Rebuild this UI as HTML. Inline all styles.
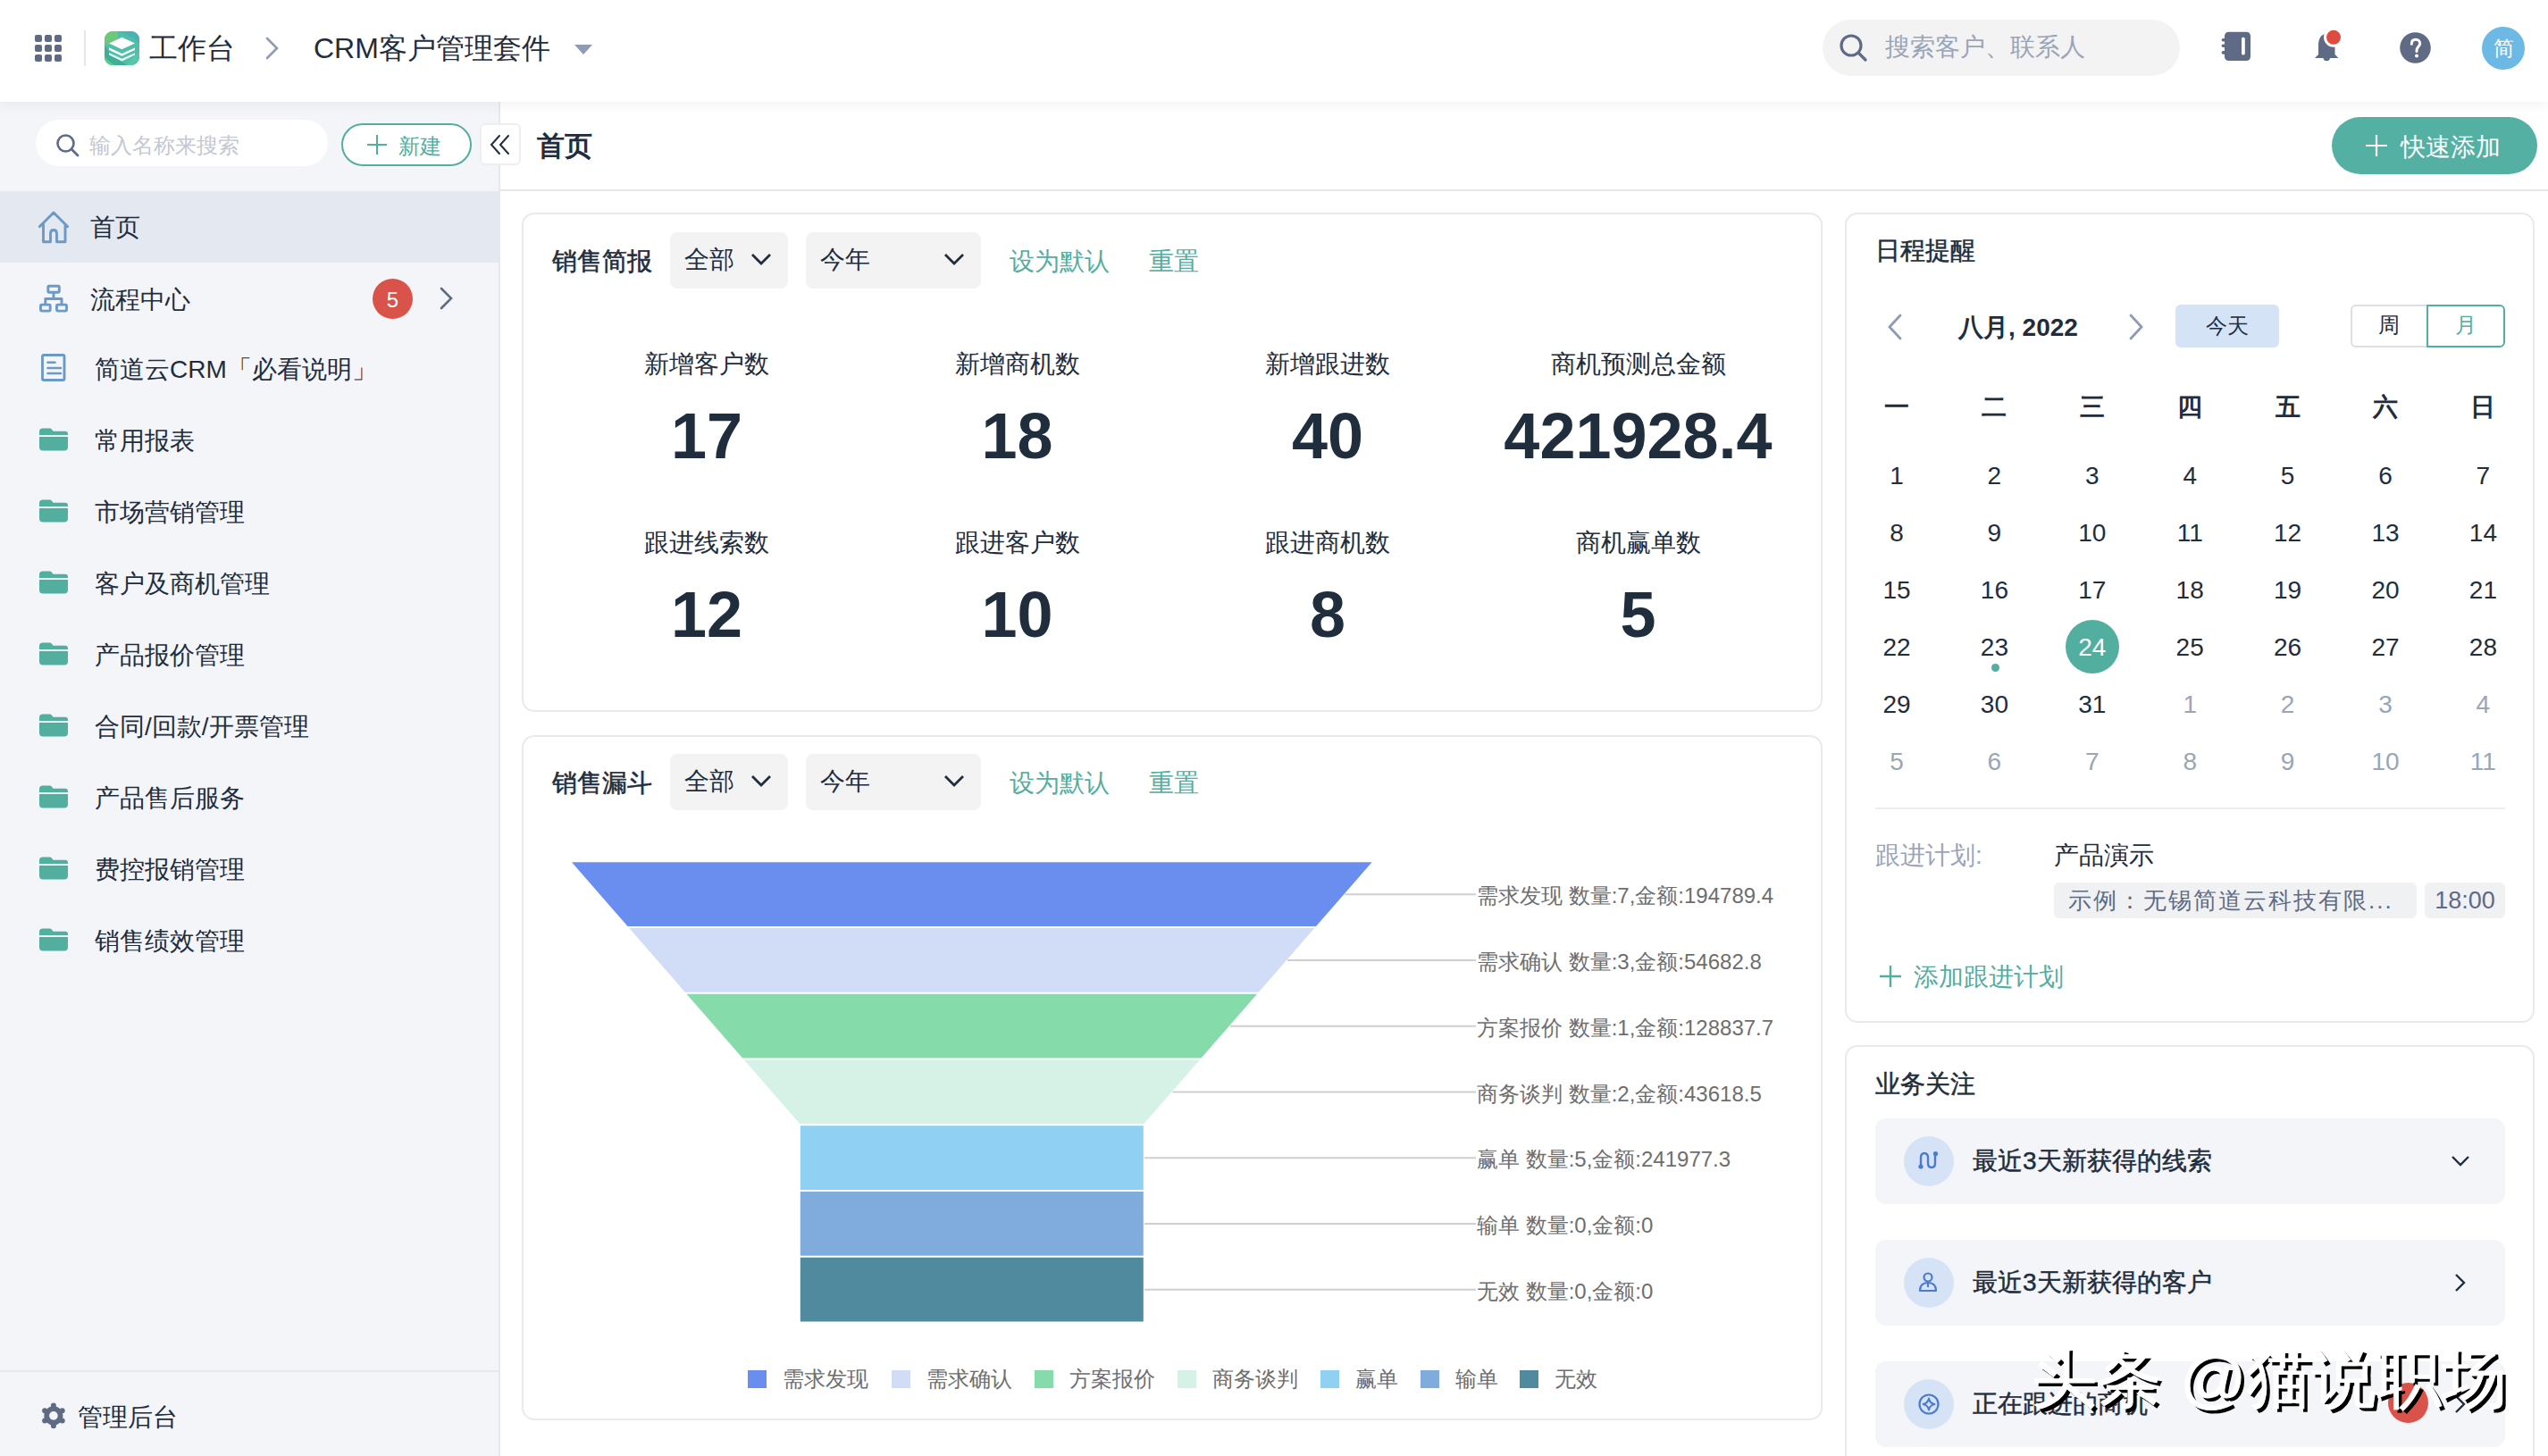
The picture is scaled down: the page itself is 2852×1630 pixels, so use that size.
<!DOCTYPE html>
<html><head><meta charset="utf-8">
<style>
*{margin:0;padding:0;box-sizing:border-box}
html,body{width:2852px;height:1630px;overflow:hidden;background:#fff;font-family:"Liberation Sans",sans-serif;color:#1f2d3d}
.a{position:absolute}
.t{position:absolute;white-space:nowrap;line-height:1}
#hdr{left:0;top:0;width:2852px;height:114px;background:#fff;z-index:3;box-shadow:0 3px 14px rgba(0,0,0,0.06)}
#side{left:0;top:114px;width:560px;height:1516px;background:#f3f5f9;border-right:2px solid #e6e8ec}
.card{position:absolute;background:#fff;border:2px solid #e9eaec;border-radius:14px}
</style></head>
<body>
<div id="hdr" class="a">
  <!-- grid -->
  <svg class="a" style="left:38px;top:38px" width="32" height="32" viewBox="0 0 32 32">
    <g fill="#5f6b84">
      <rect x="1" y="1" width="8" height="8" rx="2"/><rect x="12" y="1" width="8" height="8" rx="2"/><rect x="23" y="1" width="8" height="8" rx="2"/>
      <rect x="1" y="12" width="8" height="8" rx="2"/><rect x="12" y="12" width="8" height="8" rx="2"/><rect x="23" y="12" width="8" height="8" rx="2"/>
      <rect x="1" y="23" width="8" height="8" rx="2"/><rect x="12" y="23" width="8" height="8" rx="2"/><rect x="23" y="23" width="8" height="8" rx="2"/>
    </g>
  </svg>
  <div class="a" style="left:94px;top:34px;width:2px;height:40px;background:#e6e6e6"></div>
  <svg class="a" style="left:117px;top:35px" width="39" height="38" viewBox="0 0 39 38"><defs><clipPath id="lc"><rect width="39" height="38" rx="9"/></clipPath></defs><g clip-path="url(#lc)"><rect width="39" height="38" fill="#4fbfa8"/><path d="M14 0 H39 V14 Q30 4 14 0Z" fill="#47b3b4"/><circle cx="5" cy="5" r="10" fill="#6cc87a"/><path d="M0 16 Q10 30 26 38 H0Z" fill="#3fae96"/><path d="M0 28 Q4 34 12 38 H0Z" fill="#5ccf86"/><path d="M39 22 Q30 32 24 38 H39Z" fill="#56c6ab"/></g><path d="M5 13.5 L19.5 6.8 L34 13.5 L19.5 20.2Z" fill="#fff"/><path d="M5 18.2 L19.5 25 L34 18.4 L34 21 L19.5 27.8 L5 21Z" fill="#fff"/><path d="M5 24 L19.5 30.8 L34 24.2 L34 26.6 L19.5 33.4 L5 26.6Z" fill="#e6fbf6"/></svg>
  <div class="t" style="left:167px;top:38px;font-size:32px;color:#1f2d3d">工作台</div>
  <svg class="a" style="left:296px;top:40px" width="18" height="28" viewBox="0 0 18 28"><path d="M3 3 L14 14 L3 25" fill="none" stroke="#8f9bb3" stroke-width="2.6" stroke-linecap="round"/></svg>
  <div class="t" style="left:351px;top:38px;font-size:32px;color:#1f2d3d">CRM客户管理套件</div>
  <svg class="a" style="left:642px;top:49px" width="22" height="14" viewBox="0 0 22 14"><path d="M1 1 L21 1 L11 12Z" fill="#8f9bb3"/></svg>

  <div class="a" style="left:2040px;top:22px;width:400px;height:63px;border-radius:32px;background:#f3f3f4"></div>
  <svg class="a" style="left:2058px;top:37px" width="34" height="34" viewBox="0 0 34 34"><circle cx="14" cy="14" r="11" fill="none" stroke="#5f6b84" stroke-width="3.2"/><path d="M22 22 L30 30" stroke="#5f6b84" stroke-width="3.2" stroke-linecap="round"/></svg>
  <div class="t" style="left:2110px;top:39px;font-size:28px;color:#9aa5b8">搜索客户、联系人</div>

  <svg class="a" style="left:2484px;top:34px" width="38" height="38" viewBox="0 0 38 38"><rect x="6" y="1.7" width="29" height="32.3" rx="4.5" fill="#5f6b84"/><rect x="2.6" y="9" width="5" height="3.6" rx="1.8" fill="#5f6b84"/><rect x="2.6" y="15.4" width="5" height="3.6" rx="1.8" fill="#5f6b84"/><rect x="2.6" y="23.1" width="5" height="3.6" rx="1.8" fill="#5f6b84"/><rect x="25" y="7.8" width="3.8" height="19.6" rx="1.6" fill="#fff"/></svg>
  <svg class="a" style="left:2586px;top:28px" width="44" height="44" viewBox="0 0 44 44"><path d="M18 10 C11 10 9 17 9 23 L9 33 L5 37 L31.5 37 L27.5 33 L27.5 23 C27.5 17 25 10 18 10Z" fill="#5f6b84"/><path d="M14.5 37 A3.8 3.8 0 0 0 22 37Z" fill="#5f6b84"/><circle cx="26" cy="13.8" r="11" fill="#fff"/><circle cx="26" cy="13.8" r="8" fill="#e04a3f"/></svg>
  <svg class="a" style="left:2686px;top:36px" width="36" height="36" viewBox="0 0 36 36"><circle cx="17.5" cy="17.5" r="17.3" fill="#5f6b84"/><path d="M13.3 13.2 C13.3 10 15.3 8.3 18 8.3 C20.8 8.3 22.7 10.2 22.7 12.8 C22.7 15.8 19 16.5 19 20.5 V21.5" fill="none" stroke="#fff" stroke-width="3" stroke-linecap="round"/><circle cx="19" cy="26.6" r="2" fill="#fff"/></svg>
  <div class="a" style="left:2778px;top:30px;width:48px;height:48px;border-radius:50%;background:#6cb9e6"></div>
  <div class="t" style="left:2778px;top:43px;width:48px;text-align:center;font-size:23px;color:#fff">简</div>
</div>

<div id="side" class="a">
</div>
<!-- sidebar content (absolute page coords) -->
<div class="a" style="left:40px;top:134px;width:327px;height:52px;border-radius:26px;background:#fff"></div>
<svg class="a" style="left:62px;top:149px" width="28" height="28" viewBox="0 0 28 28"><circle cx="11.5" cy="11.5" r="9" fill="none" stroke="#5f6b84" stroke-width="2.6"/><path d="M18.5 18.5 L25 25" stroke="#5f6b84" stroke-width="2.8" stroke-linecap="round"/></svg>
<div class="t" style="left:100px;top:151px;font-size:24px;color:#c3c8d2">输入名称来搜索</div>
<div class="a" style="left:382px;top:138px;width:146px;height:48px;border-radius:24px;border:2px solid #52ae9f;background:#fff"></div>
<svg class="a" style="left:410px;top:150px" width="24" height="24" viewBox="0 0 24 24"><path d="M12 1 V23 M1 12 H23" stroke="#52ae9f" stroke-width="2"/></svg>
<div class="t" style="left:446px;top:152px;font-size:24px;color:#52ae9f">新建</div>
<div class="a" style="left:537px;top:138px;width:46px;height:47px;border-radius:6px;border:2px solid #eceef1;background:#fff;z-index:2"></div>
<svg class="a" style="left:546px;top:150px;z-index:2" width="28" height="24" viewBox="0 0 28 24"><path d="M13 2 L4 12 L13 22 M23 2 L14 12 L23 22" fill="none" stroke="#1f2d3d" stroke-width="2" stroke-linecap="round"/></svg>

<div class="a" style="left:0;top:214px;width:559px;height:80px;background:#e4e8f0"></div>
<svg class="a" style="left:40px;top:234px" width="40" height="40" viewBox="0 0 40 40"><path d="M3.5 20.5 L20 4 L36.5 20.5 M8.5 16 V36.8 H16.5 V27.5 Q16.5 23.5 20 23.5 Q23.5 23.5 23.5 27.5 V36.8 H33 V16" fill="none" stroke="#6c9ac6" stroke-width="2.9" stroke-linejoin="round"/></svg>
<div class="t" style="left:101px;top:241px;font-size:28px">首页</div>

<svg class="a" style="left:40px;top:314px" width="40" height="40" viewBox="0 0 40 40"><g fill="none" stroke="#6c9ac6" stroke-width="2.9" stroke-linejoin="round"><rect x="13.8" y="6.2" width="12.5" height="7" rx="1"/><rect x="5.5" y="27.1" width="10.7" height="7" rx="1"/><rect x="23.5" y="27.1" width="11" height="7" rx="1"/><path d="M20 13.2 V20.5 M10.8 27 V20.5 H29 V27"/></g></svg>
<div class="t" style="left:101px;top:322px;font-size:28px">流程中心</div>
<div class="a" style="left:417px;top:312px;width:45px;height:45px;border-radius:50%;background:#d9534a"></div>
<div class="t" style="left:417px;top:324px;width:45px;text-align:center;font-size:24px;color:#fff">5</div>
<svg class="a" style="left:490px;top:320px" width="20" height="28" viewBox="0 0 20 28"><path d="M4 3 L15 14 L4 25" fill="none" stroke="#5f6b84" stroke-width="2.6" stroke-linecap="round"/></svg>

<svg class="a" style="left:40px;top:390px" width="40" height="40" viewBox="0 0 40 40"><g fill="none" stroke="#6c9ac6" stroke-width="2.9"><rect x="7.5" y="7.5" width="24.5" height="28" rx="1.5"/><path d="M13.5 15.8 H21.5 M13.5 22 H28 M13.5 28 H28" stroke-width="2.6" stroke-linecap="round"/></g></svg>
<div class="t" style="left:106px;top:400px;font-size:28px">简道云CRM「必看说明」</div>
<svg class="a" style="left:44px;top:479px" width="33" height="26" viewBox="0 0 33 26"><path d="M0 4 Q0 0.5 4 0.5 L11.5 0.5 Q13 0.5 14 1.8 L15.5 3.8 L29 3.8 Q32 3.8 32 7 L32 21.5 Q32 25.5 28 25.5 L4 25.5 Q0 25.5 0 21.5Z" fill="#52ae9f"/><path d="M0 9 H33" stroke="#eef9f6" stroke-width="2"/></svg>
<div class="t" style="left:106px;top:480px;font-size:28px">常用报表</div>
<svg class="a" style="left:44px;top:559px" width="33" height="26" viewBox="0 0 33 26"><path d="M0 4 Q0 0.5 4 0.5 L11.5 0.5 Q13 0.5 14 1.8 L15.5 3.8 L29 3.8 Q32 3.8 32 7 L32 21.5 Q32 25.5 28 25.5 L4 25.5 Q0 25.5 0 21.5Z" fill="#52ae9f"/><path d="M0 9 H33" stroke="#eef9f6" stroke-width="2"/></svg>
<div class="t" style="left:106px;top:560px;font-size:28px">市场营销管理</div>
<svg class="a" style="left:44px;top:639px" width="33" height="26" viewBox="0 0 33 26"><path d="M0 4 Q0 0.5 4 0.5 L11.5 0.5 Q13 0.5 14 1.8 L15.5 3.8 L29 3.8 Q32 3.8 32 7 L32 21.5 Q32 25.5 28 25.5 L4 25.5 Q0 25.5 0 21.5Z" fill="#52ae9f"/><path d="M0 9 H33" stroke="#eef9f6" stroke-width="2"/></svg>
<div class="t" style="left:106px;top:640px;font-size:28px">客户及商机管理</div>
<svg class="a" style="left:44px;top:719px" width="33" height="26" viewBox="0 0 33 26"><path d="M0 4 Q0 0.5 4 0.5 L11.5 0.5 Q13 0.5 14 1.8 L15.5 3.8 L29 3.8 Q32 3.8 32 7 L32 21.5 Q32 25.5 28 25.5 L4 25.5 Q0 25.5 0 21.5Z" fill="#52ae9f"/><path d="M0 9 H33" stroke="#eef9f6" stroke-width="2"/></svg>
<div class="t" style="left:106px;top:720px;font-size:28px">产品报价管理</div>
<svg class="a" style="left:44px;top:799px" width="33" height="26" viewBox="0 0 33 26"><path d="M0 4 Q0 0.5 4 0.5 L11.5 0.5 Q13 0.5 14 1.8 L15.5 3.8 L29 3.8 Q32 3.8 32 7 L32 21.5 Q32 25.5 28 25.5 L4 25.5 Q0 25.5 0 21.5Z" fill="#52ae9f"/><path d="M0 9 H33" stroke="#eef9f6" stroke-width="2"/></svg>
<div class="t" style="left:106px;top:800px;font-size:28px">合同/回款/开票管理</div>
<svg class="a" style="left:44px;top:879px" width="33" height="26" viewBox="0 0 33 26"><path d="M0 4 Q0 0.5 4 0.5 L11.5 0.5 Q13 0.5 14 1.8 L15.5 3.8 L29 3.8 Q32 3.8 32 7 L32 21.5 Q32 25.5 28 25.5 L4 25.5 Q0 25.5 0 21.5Z" fill="#52ae9f"/><path d="M0 9 H33" stroke="#eef9f6" stroke-width="2"/></svg>
<div class="t" style="left:106px;top:880px;font-size:28px">产品售后服务</div>
<svg class="a" style="left:44px;top:959px" width="33" height="26" viewBox="0 0 33 26"><path d="M0 4 Q0 0.5 4 0.5 L11.5 0.5 Q13 0.5 14 1.8 L15.5 3.8 L29 3.8 Q32 3.8 32 7 L32 21.5 Q32 25.5 28 25.5 L4 25.5 Q0 25.5 0 21.5Z" fill="#52ae9f"/><path d="M0 9 H33" stroke="#eef9f6" stroke-width="2"/></svg>
<div class="t" style="left:106px;top:960px;font-size:28px">费控报销管理</div>
<svg class="a" style="left:44px;top:1039px" width="33" height="26" viewBox="0 0 33 26"><path d="M0 4 Q0 0.5 4 0.5 L11.5 0.5 Q13 0.5 14 1.8 L15.5 3.8 L29 3.8 Q32 3.8 32 7 L32 21.5 Q32 25.5 28 25.5 L4 25.5 Q0 25.5 0 21.5Z" fill="#52ae9f"/><path d="M0 9 H33" stroke="#eef9f6" stroke-width="2"/></svg>
<div class="t" style="left:106px;top:1040px;font-size:28px">销售绩效管理</div>
<div class="a" style="left:0;top:1534px;width:559px;height:2px;background:#e6e8ec"></div>
<svg class="a" style="left:40px;top:1565px" width="40" height="40" viewBox="0 0 40 40"><g fill="#5f6b84"><circle cx="19.9" cy="19.9" r="10.6"/><circle cx="19.90" cy="8.60" r="3"/><circle cx="29.69" cy="14.25" r="3"/><circle cx="29.69" cy="25.55" r="3"/><circle cx="19.90" cy="31.20" r="3"/><circle cx="10.11" cy="25.55" r="3"/><circle cx="10.11" cy="14.25" r="3"/></g><circle cx="19.9" cy="19.9" r="4.8" fill="#f3f5f9"/></svg>
<div class="t" style="left:87px;top:1573px;font-size:28px">管理后台</div>


<!-- main header -->
<div class="t" style="left:601px;top:148px;font-size:31px;font-weight:bold;color:#1f2d3d">首页</div>
<div class="a" style="left:2610px;top:131px;width:230px;height:64px;border-radius:32px;background:#55b0a4"></div>
<svg class="a" style="left:2647px;top:150px" width="26" height="26" viewBox="0 0 26 26"><path d="M13 1 V25 M1 13 H25" stroke="#fff" stroke-width="2.2"/></svg>
<div class="t" style="left:2687px;top:151px;font-size:28px;color:#fff">快速添加</div>
<div class="a" style="left:560px;top:212px;width:2292px;height:2px;background:#e6e7e9"></div>

<!-- card 1: sales summary -->
<div class="card" style="left:584px;top:238px;width:1456px;height:559px"></div>
<div class="t" style="left:618px;top:279px;font-size:28px;-webkit-text-stroke:0.55px #1f2d3d">销售简报</div>
<div class="a" style="left:750px;top:260px;width:132px;height:63px;border-radius:8px;background:#f3f3f4"></div>
<div class="t" style="left:766px;top:277px;font-size:28px">全部</div>
<svg class="a" style="left:839px;top:282px" width="26" height="18" viewBox="0 0 26 18"><path d="M3 3 L13 13 L23 3" fill="none" stroke="#1f2d3d" stroke-width="2.8"/></svg>
<div class="a" style="left:902px;top:260px;width:196px;height:63px;border-radius:8px;background:#f3f3f4"></div>
<div class="t" style="left:918px;top:277px;font-size:28px">今年</div>
<svg class="a" style="left:1055px;top:282px" width="26" height="18" viewBox="0 0 26 18"><path d="M3 3 L13 13 L23 3" fill="none" stroke="#1f2d3d" stroke-width="2.8"/></svg>
<div class="t" style="left:1130px;top:279px;font-size:28px;color:#52ae9f">设为默认</div>
<div class="t" style="left:1286px;top:279px;font-size:28px;color:#52ae9f">重置</div>
<div class="t" style="left:591.0px;top:394px;width:400px;text-align:center;font-size:28px;color:#1f2d3d">新增客户数</div>
<div class="t" style="left:541.0px;top:452px;width:500px;text-align:center;font-size:72px;font-weight:bold;color:#1f2d3d">17</div>
<div class="t" style="left:938.5px;top:394px;width:400px;text-align:center;font-size:28px;color:#1f2d3d">新增商机数</div>
<div class="t" style="left:888.5px;top:452px;width:500px;text-align:center;font-size:72px;font-weight:bold;color:#1f2d3d">18</div>
<div class="t" style="left:1286.0px;top:394px;width:400px;text-align:center;font-size:28px;color:#1f2d3d">新增跟进数</div>
<div class="t" style="left:1236.0px;top:452px;width:500px;text-align:center;font-size:72px;font-weight:bold;color:#1f2d3d">40</div>
<div class="t" style="left:1633.5px;top:394px;width:400px;text-align:center;font-size:28px;color:#1f2d3d">商机预测总金额</div>
<div class="t" style="left:1583.5px;top:452px;width:500px;text-align:center;font-size:72px;font-weight:bold;color:#1f2d3d">421928.4</div>
<div class="t" style="left:591.0px;top:594px;width:400px;text-align:center;font-size:28px;color:#1f2d3d">跟进线索数</div>
<div class="t" style="left:541.0px;top:652px;width:500px;text-align:center;font-size:72px;font-weight:bold;color:#1f2d3d">12</div>
<div class="t" style="left:938.5px;top:594px;width:400px;text-align:center;font-size:28px;color:#1f2d3d">跟进客户数</div>
<div class="t" style="left:888.5px;top:652px;width:500px;text-align:center;font-size:72px;font-weight:bold;color:#1f2d3d">10</div>
<div class="t" style="left:1286.0px;top:594px;width:400px;text-align:center;font-size:28px;color:#1f2d3d">跟进商机数</div>
<div class="t" style="left:1236.0px;top:652px;width:500px;text-align:center;font-size:72px;font-weight:bold;color:#1f2d3d">8</div>
<div class="t" style="left:1633.5px;top:594px;width:400px;text-align:center;font-size:28px;color:#1f2d3d">商机赢单数</div>
<div class="t" style="left:1583.5px;top:652px;width:500px;text-align:center;font-size:72px;font-weight:bold;color:#1f2d3d">5</div>

<!-- card 2: funnel -->
<div class="card" style="left:584px;top:823px;width:1456px;height:767px"></div>
<div class="t" style="left:618px;top:863px;font-size:28px;-webkit-text-stroke:0.55px #1f2d3d">销售漏斗</div>
<div class="a" style="left:750px;top:844px;width:132px;height:63px;border-radius:8px;background:#f3f3f4"></div>
<div class="t" style="left:766px;top:861px;font-size:28px">全部</div>
<svg class="a" style="left:839px;top:866px" width="26" height="18" viewBox="0 0 26 18"><path d="M3 3 L13 13 L23 3" fill="none" stroke="#1f2d3d" stroke-width="2.8"/></svg>
<div class="a" style="left:902px;top:844px;width:196px;height:63px;border-radius:8px;background:#f3f3f4"></div>
<div class="t" style="left:918px;top:861px;font-size:28px">今年</div>
<svg class="a" style="left:1055px;top:866px" width="26" height="18" viewBox="0 0 26 18"><path d="M3 3 L13 13 L23 3" fill="none" stroke="#1f2d3d" stroke-width="2.8"/></svg>
<div class="t" style="left:1130px;top:863px;font-size:28px;color:#52ae9f">设为默认</div>
<div class="t" style="left:1286px;top:863px;font-size:28px;color:#52ae9f">重置</div>
<svg class="a" style="left:0;top:0" width="2852" height="1630"><polygon points="640.0,965.3 1535.6,965.3 1473.0,1037.1 702.6,1037.1" fill="#6a8ef0"/><line x1="1505.3" y1="1001.2" x2="1652" y2="1001.2" stroke="#cfcfcf" stroke-width="2"/><polygon points="704.3,1039.0 1471.3,1039.0 1408.8,1110.8 766.8,1110.8" fill="#d1dcf7"/><line x1="1441.0" y1="1074.9" x2="1652" y2="1074.9" stroke="#cfcfcf" stroke-width="2"/><polygon points="768.5,1112.8 1407.1,1112.8 1344.5,1184.6 831.1,1184.6" fill="#85dba9"/><line x1="1376.8" y1="1148.7" x2="1652" y2="1148.7" stroke="#cfcfcf" stroke-width="2"/><polygon points="832.8,1186.5 1342.8,1186.5 1280.2,1258.3 895.4,1258.3" fill="#d6f1e6"/><line x1="1312.5" y1="1222.4" x2="1652" y2="1222.4" stroke="#cfcfcf" stroke-width="2"/><polygon points="895.8,1260.3 1279.8,1260.3 1279.8,1332.1 895.8,1332.1" fill="#90d0f2"/><line x1="1280.8" y1="1296.2" x2="1652" y2="1296.2" stroke="#cfcfcf" stroke-width="2"/><polygon points="895.8,1334.0 1279.8,1334.0 1279.8,1405.8 895.8,1405.8" fill="#80abdd"/><line x1="1280.8" y1="1369.9" x2="1652" y2="1369.9" stroke="#cfcfcf" stroke-width="2"/><polygon points="895.8,1407.8 1279.8,1407.8 1279.8,1479.6 895.8,1479.6" fill="#4f8a9e"/><line x1="1280.8" y1="1443.7" x2="1652" y2="1443.7" stroke="#cfcfcf" stroke-width="2"/></svg>
<div class="t" style="left:1653px;top:991.2px;font-size:24px;color:#6e6e6e">需求发现 数量:7,金额:194789.4</div>
<div class="t" style="left:1653px;top:1065.0px;font-size:24px;color:#6e6e6e">需求确认 数量:3,金额:54682.8</div>
<div class="t" style="left:1653px;top:1138.7px;font-size:24px;color:#6e6e6e">方案报价 数量:1,金额:128837.7</div>
<div class="t" style="left:1653px;top:1212.5px;font-size:24px;color:#6e6e6e">商务谈判 数量:2,金额:43618.5</div>
<div class="t" style="left:1653px;top:1286.2px;font-size:24px;color:#6e6e6e">赢单 数量:5,金额:241977.3</div>
<div class="t" style="left:1653px;top:1360.0px;font-size:24px;color:#6e6e6e">输单 数量:0,金额:0</div>
<div class="t" style="left:1653px;top:1433.7px;font-size:24px;color:#6e6e6e">无效 数量:0,金额:0</div>
<div class="a" style="left:837px;top:1534px;width:21px;height:20px;background:#6a8ef0"></div><div class="t" style="left:876px;top:1532px;font-size:24px;color:#6e6e6e">需求发现</div>
<div class="a" style="left:997.5px;top:1534px;width:21px;height:20px;background:#d1dcf7"></div><div class="t" style="left:1036.5px;top:1532px;font-size:24px;color:#6e6e6e">需求确认</div>
<div class="a" style="left:1158px;top:1534px;width:21px;height:20px;background:#85dba9"></div><div class="t" style="left:1197px;top:1532px;font-size:24px;color:#6e6e6e">方案报价</div>
<div class="a" style="left:1317.5px;top:1534px;width:21px;height:20px;background:#d6f1e6"></div><div class="t" style="left:1356.5px;top:1532px;font-size:24px;color:#6e6e6e">商务谈判</div>
<div class="a" style="left:1477.5px;top:1534px;width:21px;height:20px;background:#90d0f2"></div><div class="t" style="left:1516.5px;top:1532px;font-size:24px;color:#6e6e6e">赢单</div>
<div class="a" style="left:1589.5px;top:1534px;width:21px;height:20px;background:#80abdd"></div><div class="t" style="left:1628.5px;top:1532px;font-size:24px;color:#6e6e6e">输单</div>
<div class="a" style="left:1701px;top:1534px;width:21px;height:20px;background:#4f8a9e"></div><div class="t" style="left:1740px;top:1532px;font-size:24px;color:#6e6e6e">无效</div>

<!-- calendar card -->
<div class="card" style="left:2065px;top:238px;width:772px;height:907px"></div>
<div class="t" style="left:2099px;top:267px;font-size:28px;-webkit-text-stroke:0.5px #1f2d3d;color:#1f2d3d">日程提醒</div>
<svg class="a" style="left:2110px;top:350px" width="22" height="32" viewBox="0 0 22 32"><path d="M17 3 L5 16 L17 29" fill="none" stroke="#8f9bb3" stroke-width="2.8" stroke-linecap="round"/></svg>
<div class="t" style="left:2192px;top:353px;font-size:28px;font-weight:bold;color:#1f2d3d">八月, 2022</div>
<svg class="a" style="left:2380px;top:350px" width="22" height="32" viewBox="0 0 22 32"><path d="M5 3 L17 16 L5 29" fill="none" stroke="#8f9bb3" stroke-width="2.8" stroke-linecap="round"/></svg>
<div class="a" style="left:2435px;top:341px;width:116px;height:48px;border-radius:6px;background:#d5e3f7"></div>
<div class="t" style="left:2435px;top:353px;width:116px;text-align:center;font-size:24px;color:#1f2d3d">今天</div>
<div class="a" style="left:2631px;top:341px;width:88px;height:48px;border:2px solid #dcdfe6;border-right:none;border-radius:6px 0 0 6px;background:#fff"></div>
<div class="t" style="left:2631px;top:352px;width:86px;text-align:center;font-size:24px;color:#1f2d3d">周</div>
<div class="a" style="left:2716px;top:341px;width:88px;height:48px;border:2px solid #52ae9f;border-radius:0 6px 6px 0;background:#fff"></div>
<div class="t" style="left:2716px;top:352px;width:88px;text-align:center;font-size:24px;color:#52ae9f">月</div>
<div class="t" style="left:2083.0px;top:442px;width:80px;text-align:center;font-size:28px;font-weight:bold;color:#1f2d3d">一</div>
<div class="t" style="left:2192.4px;top:442px;width:80px;text-align:center;font-size:28px;font-weight:bold;color:#1f2d3d">二</div>
<div class="t" style="left:2301.8px;top:442px;width:80px;text-align:center;font-size:28px;font-weight:bold;color:#1f2d3d">三</div>
<div class="t" style="left:2411.2px;top:442px;width:80px;text-align:center;font-size:28px;font-weight:bold;color:#1f2d3d">四</div>
<div class="t" style="left:2520.6px;top:442px;width:80px;text-align:center;font-size:28px;font-weight:bold;color:#1f2d3d">五</div>
<div class="t" style="left:2630.0px;top:442px;width:80px;text-align:center;font-size:28px;font-weight:bold;color:#1f2d3d">六</div>
<div class="t" style="left:2739.4px;top:442px;width:80px;text-align:center;font-size:28px;font-weight:bold;color:#1f2d3d">日</div>
<div class="t" style="left:2083.0px;top:519px;width:80px;text-align:center;font-size:28px;color:#1f2d3d">1</div>
<div class="t" style="left:2192.4px;top:519px;width:80px;text-align:center;font-size:28px;color:#1f2d3d">2</div>
<div class="t" style="left:2301.8px;top:519px;width:80px;text-align:center;font-size:28px;color:#1f2d3d">3</div>
<div class="t" style="left:2411.2px;top:519px;width:80px;text-align:center;font-size:28px;color:#1f2d3d">4</div>
<div class="t" style="left:2520.6px;top:519px;width:80px;text-align:center;font-size:28px;color:#1f2d3d">5</div>
<div class="t" style="left:2630.0px;top:519px;width:80px;text-align:center;font-size:28px;color:#1f2d3d">6</div>
<div class="t" style="left:2739.4px;top:519px;width:80px;text-align:center;font-size:28px;color:#1f2d3d">7</div>
<div class="t" style="left:2083.0px;top:583px;width:80px;text-align:center;font-size:28px;color:#1f2d3d">8</div>
<div class="t" style="left:2192.4px;top:583px;width:80px;text-align:center;font-size:28px;color:#1f2d3d">9</div>
<div class="t" style="left:2301.8px;top:583px;width:80px;text-align:center;font-size:28px;color:#1f2d3d">10</div>
<div class="t" style="left:2411.2px;top:583px;width:80px;text-align:center;font-size:28px;color:#1f2d3d">11</div>
<div class="t" style="left:2520.6px;top:583px;width:80px;text-align:center;font-size:28px;color:#1f2d3d">12</div>
<div class="t" style="left:2630.0px;top:583px;width:80px;text-align:center;font-size:28px;color:#1f2d3d">13</div>
<div class="t" style="left:2739.4px;top:583px;width:80px;text-align:center;font-size:28px;color:#1f2d3d">14</div>
<div class="t" style="left:2083.0px;top:647px;width:80px;text-align:center;font-size:28px;color:#1f2d3d">15</div>
<div class="t" style="left:2192.4px;top:647px;width:80px;text-align:center;font-size:28px;color:#1f2d3d">16</div>
<div class="t" style="left:2301.8px;top:647px;width:80px;text-align:center;font-size:28px;color:#1f2d3d">17</div>
<div class="t" style="left:2411.2px;top:647px;width:80px;text-align:center;font-size:28px;color:#1f2d3d">18</div>
<div class="t" style="left:2520.6px;top:647px;width:80px;text-align:center;font-size:28px;color:#1f2d3d">19</div>
<div class="t" style="left:2630.0px;top:647px;width:80px;text-align:center;font-size:28px;color:#1f2d3d">20</div>
<div class="t" style="left:2739.4px;top:647px;width:80px;text-align:center;font-size:28px;color:#1f2d3d">21</div>
<div class="t" style="left:2083.0px;top:711px;width:80px;text-align:center;font-size:28px;color:#1f2d3d">22</div>
<div class="t" style="left:2192.4px;top:711px;width:80px;text-align:center;font-size:28px;color:#1f2d3d">23</div>
<div class="a" style="left:2311.8px;top:694px;width:60px;height:60px;border-radius:50%;background:#52ae9f"></div>
<div class="t" style="left:2301.8px;top:711px;width:80px;text-align:center;font-size:28px;color:#fff">24</div>
<div class="t" style="left:2411.2px;top:711px;width:80px;text-align:center;font-size:28px;color:#1f2d3d">25</div>
<div class="t" style="left:2520.6px;top:711px;width:80px;text-align:center;font-size:28px;color:#1f2d3d">26</div>
<div class="t" style="left:2630.0px;top:711px;width:80px;text-align:center;font-size:28px;color:#1f2d3d">27</div>
<div class="t" style="left:2739.4px;top:711px;width:80px;text-align:center;font-size:28px;color:#1f2d3d">28</div>
<div class="t" style="left:2083.0px;top:775px;width:80px;text-align:center;font-size:28px;color:#1f2d3d">29</div>
<div class="t" style="left:2192.4px;top:775px;width:80px;text-align:center;font-size:28px;color:#1f2d3d">30</div>
<div class="t" style="left:2301.8px;top:775px;width:80px;text-align:center;font-size:28px;color:#1f2d3d">31</div>
<div class="t" style="left:2411.2px;top:775px;width:80px;text-align:center;font-size:28px;color:#9aa5b8">1</div>
<div class="t" style="left:2520.6px;top:775px;width:80px;text-align:center;font-size:28px;color:#9aa5b8">2</div>
<div class="t" style="left:2630.0px;top:775px;width:80px;text-align:center;font-size:28px;color:#9aa5b8">3</div>
<div class="t" style="left:2739.4px;top:775px;width:80px;text-align:center;font-size:28px;color:#9aa5b8">4</div>
<div class="t" style="left:2083.0px;top:839px;width:80px;text-align:center;font-size:28px;color:#9aa5b8">5</div>
<div class="t" style="left:2192.4px;top:839px;width:80px;text-align:center;font-size:28px;color:#9aa5b8">6</div>
<div class="t" style="left:2301.8px;top:839px;width:80px;text-align:center;font-size:28px;color:#9aa5b8">7</div>
<div class="t" style="left:2411.2px;top:839px;width:80px;text-align:center;font-size:28px;color:#9aa5b8">8</div>
<div class="t" style="left:2520.6px;top:839px;width:80px;text-align:center;font-size:28px;color:#9aa5b8">9</div>
<div class="t" style="left:2630.0px;top:839px;width:80px;text-align:center;font-size:28px;color:#9aa5b8">10</div>
<div class="t" style="left:2739.4px;top:839px;width:80px;text-align:center;font-size:28px;color:#9aa5b8">11</div>
<div class="a" style="left:2228.5px;top:743px;width:9px;height:9px;border-radius:50%;background:#52ae9f"></div>
<div class="a" style="left:2099px;top:904px;width:705px;height:2px;background:#ebedf0"></div>
<div class="t" style="left:2099px;top:944px;font-size:28px;color:#9aa5b8">跟进计划:</div>
<div class="t" style="left:2299px;top:944px;font-size:28px;color:#1f2d3d">产品演示</div>
<div class="a" style="left:2299px;top:988px;width:406px;height:40px;border-radius:6px;background:#f0f1f3"></div>
<div class="t" style="left:2315px;top:995px;font-size:26px;letter-spacing:2px;color:#5f6b84">示例：无锡简道云科技有限...</div>
<div class="a" style="left:2714px;top:988px;width:90px;height:40px;border-radius:6px;background:#f0f1f3"></div>
<div class="t" style="left:2714px;top:995px;width:90px;text-align:center;font-size:27px;color:#5f6b84">18:00</div>
<svg class="a" style="left:2103px;top:1080px" width="26" height="26" viewBox="0 0 26 26"><path d="M13 1 V25 M1 13 H25" stroke="#52ae9f" stroke-width="2.4"/></svg>
<div class="t" style="left:2142px;top:1080px;font-size:28px;color:#52ae9f">添加跟进计划</div>

<!-- business card -->
<div class="card" style="left:2065px;top:1170px;width:772px;height:520px"></div>
<div class="t" style="left:2099px;top:1200px;font-size:28px;-webkit-text-stroke:0.5px #1f2d3d;color:#1f2d3d">业务关注</div>
<div class="a" style="left:2099px;top:1252px;width:705px;height:96px;border-radius:12px;background:#f3f5f9"></div>
<div class="a" style="left:2131px;top:1272px;width:56px;height:56px;border-radius:50%;background:#d6e3f7"></div>
<svg class="a" style="left:2147px;top:1288px" width="24" height="24" viewBox="0 0 24 24"><path d="M3 17 V8 Q3 3 7 3 Q11 3 11 8 V14 Q11 19 15 19 Q19 19 19 14 V4" fill="none" stroke="#4a7bd0" stroke-width="2.4" stroke-linecap="round"/><circle cx="3" cy="18" r="2.6" fill="#4a7bd0"/><circle cx="19.5" cy="3.5" r="2.6" fill="#4a7bd0"/></svg>
<div class="t" style="left:2208px;top:1286px;font-size:28px;-webkit-text-stroke:0.45px #1f2d3d;color:#1f2d3d">最近3天新获得的线索</div>
<svg class="a" style="left:2742px;top:1292px" width="24" height="16" viewBox="0 0 24 16"><path d="M3 3 L12 12 L21 3" fill="none" stroke="#1f2d3d" stroke-width="2.4"/></svg>
<div class="a" style="left:2099px;top:1388px;width:705px;height:96px;border-radius:12px;background:#f3f5f9"></div>
<div class="a" style="left:2131px;top:1408px;width:56px;height:56px;border-radius:50%;background:#d6e3f7"></div>
<svg class="a" style="left:2147px;top:1424px" width="24" height="24" viewBox="0 0 24 24"><circle cx="11" cy="6" r="4.5" fill="none" stroke="#4a7bd0" stroke-width="2.2"/><path d="M2 21 Q2 12 11 12 Q20 12 20 21 Z" fill="none" stroke="#4a7bd0" stroke-width="2.2" stroke-linejoin="round"/><path d="M11 12 V17" stroke="#4a7bd0" stroke-width="2"/></svg>
<div class="t" style="left:2208px;top:1422px;font-size:28px;-webkit-text-stroke:0.45px #1f2d3d;color:#1f2d3d">最近3天新获得的客户</div>
<svg class="a" style="left:2746px;top:1424px" width="16" height="24" viewBox="0 0 16 24"><path d="M3 3 L12 12 L3 21" fill="none" stroke="#1f2d3d" stroke-width="2.4"/></svg>
<div class="a" style="left:2099px;top:1524px;width:705px;height:96px;border-radius:12px;background:#f3f5f9"></div>
<div class="a" style="left:2131px;top:1544px;width:56px;height:56px;border-radius:50%;background:#d6e3f7"></div>
<svg class="a" style="left:2147px;top:1560px" width="24" height="24" viewBox="0 0 24 24"><circle cx="12" cy="12" r="10.5" fill="none" stroke="#4a7bd0" stroke-width="2.2"/><path d="M12 5.5 Q13 11 18.5 12 Q13 13 12 18.5 Q11 13 5.5 12 Q11 11 12 5.5Z" fill="none" stroke="#4a7bd0" stroke-width="2" stroke-linejoin="round"/></svg>
<div class="t" style="left:2208px;top:1558px;font-size:28px;-webkit-text-stroke:0.45px #1f2d3d;color:#1f2d3d">正在跟进的商机</div>
<svg class="a" style="left:2746px;top:1560px" width="16" height="24" viewBox="0 0 16 24"><path d="M3 3 L12 12 L3 21" fill="none" stroke="#1f2d3d" stroke-width="2.4"/></svg>
<div class="a" style="left:2673px;top:1548px;width:45px;height:45px;border-radius:50%;background:#d9534a"></div>
<div class="t" style="left:2274px;top:1506px;font-size:73px;color:#fff;-webkit-text-stroke:1px #fff;text-shadow:4px 4px 0 #000;z-index:5">头条 @猫说职场</div>
</body></html>
